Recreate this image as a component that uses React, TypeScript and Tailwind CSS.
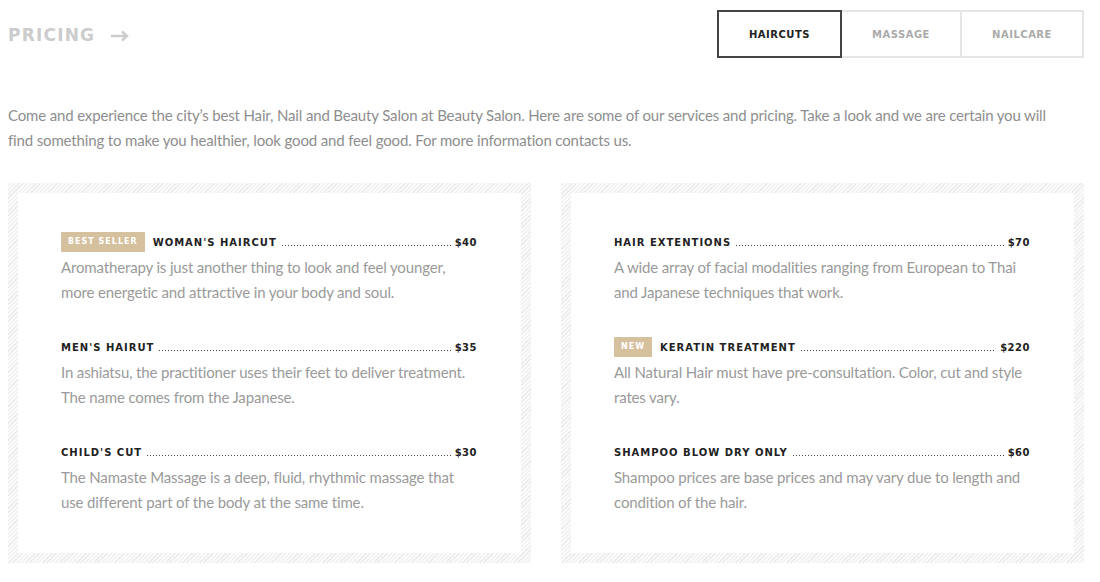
import React from "react";

type Item = {
    badge?: string;
    title: string;
    price: string;
    text: string;
};

const left: Item[] = [
    { badge: "BEST SELLER", title: "WOMAN'S HAIRCUT", price: "$40", text: "Aromatherapy is just another thing to look and feel younger, more energetic and attractive in your body and soul." },
    { title: "MEN'S HAIRUT", price: "$35", text: "In ashiatsu, the practitioner uses their feet to deliver treatment. The name comes from the Japanese." },
    { title: "CHILD'S CUT", price: "$30", text: "The Namaste Massage is a deep, fluid, rhythmic massage that use different part of the body at the same time." },
];

const right: Item[] = [
    { title: "HAIR EXTENTIONS", price: "$70", text: "A wide array of facial modalities ranging from European to Thai and Japanese techniques that work." },
    { badge: "NEW", title: "KERATIN TREATMENT", price: "$220", text: "All Natural Hair must have pre-consultation. Color, cut and style rates vary." },
    { title: "SHAMPOO BLOW DRY ONLY", price: "$60", text: "Shampoo prices are base prices and may vary due to length and condition of the hair." },
];

const heading = "font-['DejaVu_Sans',sans-serif] font-bold";
const body = "font-['Lato',sans-serif]";

const PriceRow = ({ item }: { item: Item }) => (
    <div>
        <div className={`flex items-center h-5 text-[10px] tracking-[1px] text-[#222] ${heading}`}>
            {item.badge && (
                <span className="bg-[#d6c19f] text-white text-[8px] tracking-[1px] h-5 px-[7px] mr-[8px] flex items-center rounded-[1px]">
                    {item.badge}
                </span>
            )}
            <span className="whitespace-nowrap">{item.title}</span>
            <span className="flex-1 self-end mb-[5px] mx-[4px] h-[3px] bg-repeat-x bg-[length:3px_3px] bg-[radial-gradient(circle,#444_0.75px,transparent_1px)]" />
            <span className="tracking-[0.5px]">{item.price}</span>
        </div>
        <p className={`${body} text-[15px] leading-[25px] tracking-[-0.15px] text-[#9a9a9a] mt-[3px]`}>{item.text}</p>
    </div>
);

const Card = ({ items }: { items: Item[] }) => (
    <div className="p-[10px] bg-[repeating-linear-gradient(-45deg,#ececec_0px,#ececec_1px,#fafafa_1px,#fafafa_3px)]">
        <div className="bg-white pl-[43px] pr-[44px] pt-[39px] pb-[38px] flex flex-col gap-[32px]">
            {items.map((it) => (
                <PriceRow key={it.title} item={it} />
            ))}
        </div>
    </div>
);

export default function App() {
    return (
        <div className="w-[1100px] h-[582px] bg-white px-2 overflow-hidden">
            <div className="flex items-start justify-between pt-[10px] pr-[8px]">
                <div className={`flex items-center gap-[15px] mt-[13px] text-[#cccccc] text-[17px] tracking-[1.2px] ${heading}`}>
                    <span>PRICING</span>
                    <svg width="20" height="12" viewBox="0 0 20 12" fill="none">
                        <path d="M1 6h16M12 1.5L17 6l-5 4.5" stroke="#cccccc" strokeWidth="2.4" strokeLinejoin="miter" />
                    </svg>
                </div>
                <div className={`flex text-[10px] tracking-[0.5px] ${heading}`}>
                    <div className="w-[125px] h-12 border-2 border-[#444] flex items-center justify-center text-[#222]">HAIRCUTS</div>
                    <div className="w-[118px] h-12 border-y-2 border-[#e6e6e6] flex items-center justify-center text-[#aaaaaa]">MASSAGE</div>
                    <div className="w-[124px] h-12 border-2 border-[#e6e6e6] flex items-center justify-center text-[#aaaaaa]">NAILCARE</div>
                </div>
            </div>
            <p className={`${body} text-[15px] leading-[25px] tracking-[-0.15px] text-[#8e8e8e] mt-[45px] pr-[26px]`}>
                Come and experience the city’s best Hair, Nail and Beauty Salon at Beauty Salon. Here are some of our services and pricing. Take a look and we are certain you will find something to make you healthier, look good and feel good. For more information contacts us.
            </p>
            <div className="grid grid-cols-2 gap-[30px] mt-[30px] w-[1076px]">
                <Card items={left} />
                <Card items={right} />
            </div>
        </div>
    );
}
